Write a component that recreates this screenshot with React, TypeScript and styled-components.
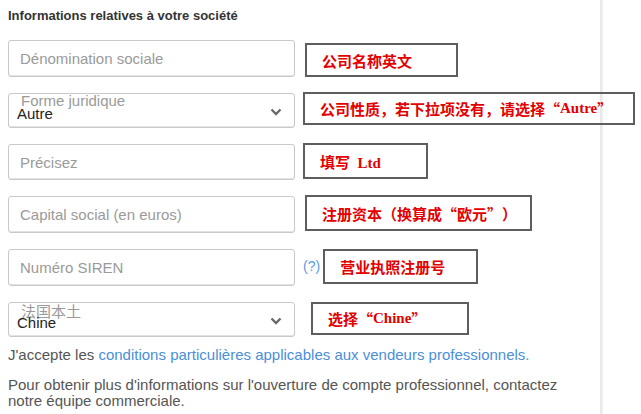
import { FC } from "react";
import styled, { createGlobalStyle } from "styled-components";

const GlobalStyle = createGlobalStyle`
  html, body {
    margin: 0;
    padding: 0;
    background: #fff;
  }
  body {
    font-family: "Liberation Sans", Arial, sans-serif;
    color: #333;
  }
`;

const Page = styled.div`
  position: relative;
  width: 641px;
  height: 414px;
  overflow: hidden;
`;

const Divider = styled.div`
  position: absolute;
  top: 0;
  bottom: 0;
  left: 600px;
  width: 3px;
  background: linear-gradient(to right, #e6e6e6, #f1f1f1);
  z-index: 0;
`;

const Content = styled.main`
  position: relative;
  z-index: 1;
  padding: 8px 0 0 8px;
`;

const Title = styled.h2`
  margin: 0 0 17px;
  font-size: 13px;
  font-weight: bold;
  line-height: 15px;
  color: #333;
`;

const Fields = styled.div`
  display: flex;
  flex-direction: column;
  gap: 16px;
`;

const Row = styled.div`
  display: flex;
  align-items: flex-start;
`;

const Field = styled.div<{ $h: number }>`
  position: relative;
  box-sizing: border-box;
  width: 287px;
  height: ${(p) => p.$h}px;
  flex-shrink: 0;
  border: 1px solid #c9c9c9;
  border-radius: 3px;
  background: #fff;
  box-shadow: inset 0 -1px 0 #e4e4e4;
`;

const Input = styled.input`
  box-sizing: border-box;
  width: 100%;
  height: 100%;
  border: 0;
  background: transparent;
  padding: 0 11px;
  font-family: "Liberation Sans", Arial, sans-serif;
  font-size: 15px;
  color: #333;
  outline: none;

  &::placeholder {
    color: #9a9a9a;
  }
`;

const FloatLabel = styled.span<{ $cjk?: boolean }>`
  position: absolute;
  left: 12px;
  top: ${(p) => (p.$cjk ? 0 : -2)}px;
  font-size: 15px;
  line-height: 17px;
  color: #9a9a9a;
  font-family: "Liberation Sans", "Noto Sans CJK SC", sans-serif;
  pointer-events: none;
`;

const SelectValue = styled.span`
  position: absolute;
  left: 8px;
  top: 11px;
  font-size: 15px;
  line-height: 17px;
  color: #222;
`;

const Chevron = styled.svg`
  position: absolute;
  right: 12px;
  top: 14px;
`;

const Help = styled.span`
  margin: 9px 3px 0 8px;
  font-size: 14px;
  color: #5b9be0;
`;

const Note = styled.div<{ $left: number; $top: number; $w: number; $h: number }>`
  box-sizing: border-box;
  margin-left: ${(p) => p.$left}px;
  margin-top: ${(p) => p.$top}px;
  width: ${(p) => p.$w}px;
  height: ${(p) => p.$h}px;
  border: 2px solid #5e5e5e;
  padding-left: 15px;
  display: flex;
  align-items: center;
  font-family: "Liberation Serif", "Noto Sans CJK SC", serif;
  font-weight: bold;
  font-size: 15px;
  color: #e30000;
  white-space: nowrap;
`;

const Quote = styled.span`
  font-family: "Noto Sans CJK SC", sans-serif;
`;

const Paragraph = styled.p`
  margin: 0;
  font-size: 15px;
  line-height: 16px;
  color: #555;
`;

const Accept = styled(Paragraph)`
  margin-top: 10px;
`;

const Info = styled(Paragraph)`
  margin-top: 14px;
`;

const Link = styled.a`
  color: #4a8fd8;
  text-decoration: none;
`;

const ChevronIcon: FC = () => (
  <Chevron width="12" height="8" viewBox="0 0 12 8">
    <polyline
      points="1.5,1.5 6,6 10.5,1.5"
      fill="none"
      stroke="#6a6a6a"
      strokeWidth="2.4"
    />
  </Chevron>
);

const App: FC = () => {
  return (
    <>
      <GlobalStyle />
      <Page>
        <Divider />
        <Content>
          <Title>Informations relatives à votre société</Title>
          <Fields>
            <Row>
              <Field $h={37}>
                <Input placeholder="Dénomination sociale" />
              </Field>
              <Note $left={10} $top={3} $w={153} $h={34}>
                公司名称英文
              </Note>
            </Row>
            <Row>
              <Field $h={35}>
                <FloatLabel>Forme juridique</FloatLabel>
                <SelectValue>Autre</SelectValue>
                <ChevronIcon />
              </Field>
              <Note $left={8} $top={-1} $w={332} $h={33}>
                公司性质，若下拉项没有，请选择<Quote>“</Quote>Autre<Quote>”</Quote>
              </Note>
            </Row>
            <Row>
              <Field $h={36}>
                <Input placeholder="Précisez" />
              </Field>
              <Note $left={8} $top={-1} $w={125} $h={36}>
                填写&nbsp;&nbsp;Ltd
              </Note>
            </Row>
            <Row>
              <Field $h={37}>
                <Input placeholder="Capital social (en euros)" />
              </Field>
              <Note $left={10} $top={-1} $w={227} $h={36}>
                注册资本（换算成<Quote>“</Quote>欧元<Quote>”</Quote>）
              </Note>
            </Row>
            <Row>
              <Field $h={37}>
                <Input placeholder="Numéro SIREN" />
              </Field>
              <Help>(?)</Help>
              <Note $left={0} $top={0} $w={155} $h={35}>
                营业执照注册号
              </Note>
            </Row>
            <Row>
              <Field $h={35}>
                <FloatLabel $cjk>法国本土</FloatLabel>
                <SelectValue>Chine</SelectValue>
                <ChevronIcon />
              </Field>
              <Note $left={16} $top={0} $w={158} $h={33}>
                选择<Quote>“</Quote>Chine<Quote>”</Quote>
              </Note>
            </Row>
          </Fields>
          <Accept>
            J'accepte les{" "}
            <Link href="#">
              conditions particulières applicables aux vendeurs professionnels.
            </Link>
          </Accept>
          <Info>
            Pour obtenir plus d'informations sur l'ouverture de compte
            professionnel, contactez
            <br />
            notre équipe commerciale.
          </Info>
        </Content>
      </Page>
    </>
  );
};

export default App;
